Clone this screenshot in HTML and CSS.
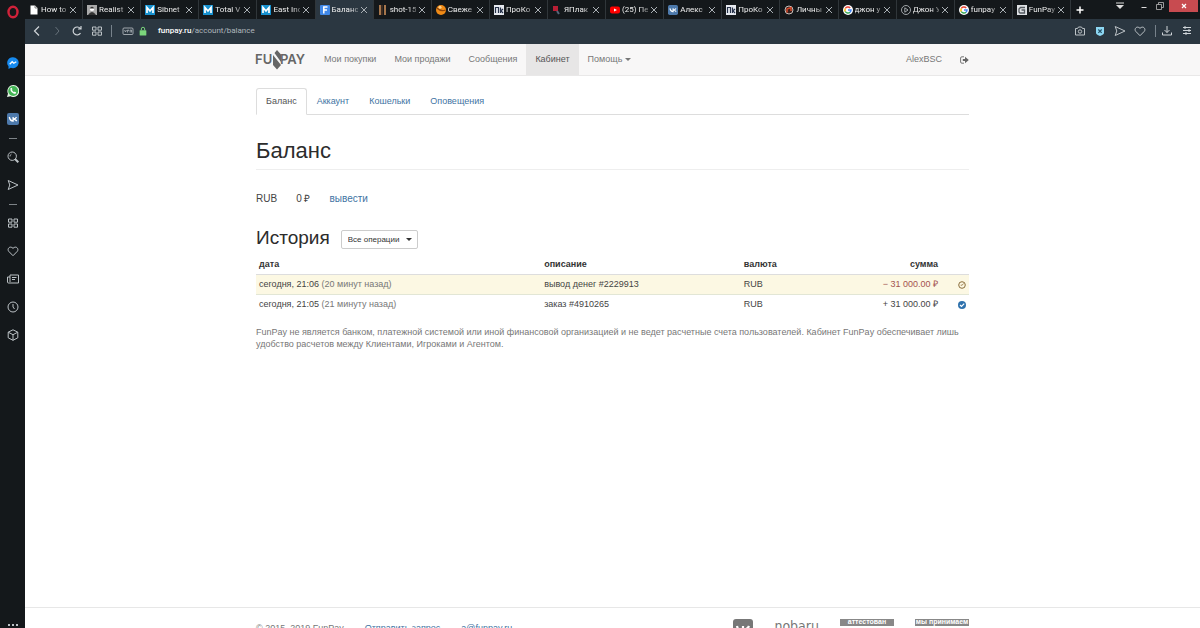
FILE: index.html
```html
<!DOCTYPE html>
<html lang="ru">
<head>
<meta charset="utf-8">
<title>Баланс</title>
<link rel="stylesheet" href="styles.css">
</head>
<body>
<svg class="defs" aria-hidden="true">
  <symbol id="x" viewBox="0 0 8 8"><path d="M1 1l6 6M7 1l-6 6" stroke="#a9afb4" stroke-width="1" fill="none"/></symbol>
  <symbol id="m" viewBox="0 0 10 10"><rect width="10" height="10" fill="#1791cf"/><path d="M2 8V2.500L5 6l3-3.500V8" fill="none" stroke="#fff" stroke-width="1.700"/></symbol>
  <symbol id="pk" viewBox="0 0 10 10"><rect width="10" height="10" fill="#e6e9ef"/><path d="M1.500 8V2.500h3V8M6.500 2.500V8M9 4L7 5.800 9 8" fill="none" stroke="#27324a" stroke-width="1.200"/></symbol>
  <symbol id="g" viewBox="0 0 10 10"><circle cx="5" cy="5" r="5" fill="#fff"/><g fill="none" stroke-width="1.500"><path d="M2.300 3.500A3 3 0 0 1 7.200 2.900" stroke="#e94235"/><path d="M2.300 3.500a3 3 0 0 0 0 3" stroke="#fabb05"/><path d="M2.300 6.500A3 3 0 0 0 7 7.200" stroke="#34a853"/><path d="M7 7.200A3 3 0 0 0 8 5H5" stroke="#4285f4"/></g></symbol>
  <symbol id="vk" viewBox="0 0 12 12"><rect width="12" height="12" rx="2" fill="#4d79ab"/><path d="M2.300 4c.5 2.500 1.700 4 3.800 4V4M9.500 4C9 5.300 8 6 6.300 6 8 6 9 7 9.800 8" fill="none" stroke="#fff" stroke-width="1.300"/></symbol>
  <symbol id="send" viewBox="0 0 12 12"><path d="M1.200 1.500L11 6 1.200 10.500 2.800 6z" fill="none" stroke="#bcc2c6"/></symbol>
  <symbol id="heart" viewBox="0 0 12 12"><path d="M6 10.700L1.700 6.300C-.2 4 2.800.2 6 3.300 9.200.2 12.200 4 10.300 6.300z" fill="none" stroke="#bcc2c6"/></symbol>
  <symbol id="grid" viewBox="0 0 12 12"><path d="M1.500 2h3.500v3.200H1.500zM7 2h3.500v3.200H7zM1.500 7H5v3.200H1.500zM7 7h3.500v3.200H7z" fill="none" stroke="#bcc2c6"/></symbol>
</svg>
<div class="browser">
  <aside class="rail">
    <button class="opera" aria-label="Меню Opera"><svg viewBox="0 0 12 14"><ellipse cx="6" cy="7" rx="4.500" ry="5.300" fill="none" stroke="#d0223a" stroke-width="2.400"/></svg></button>
    <button aria-label="Messenger"><svg viewBox="0 0 12 12"><path d="M6 .3a5.700 5.400 0 1 1-2.200 10.400L1.500 12V9.300A5.500 5.500 0 0 1 6 .3" fill="#168af0"/><path d="M2.700 7.300L5.200 4.700 6.800 6.200 9.300 4.700" fill="none" stroke="#fff" stroke-width="1.300"/></svg></button>
    <button aria-label="WhatsApp"><svg viewBox="0 0 12 12"><path d="M6.200 0a6 6 0 1 1-2.700 11.300L0 12l1-3.300A6 6 0 0 1 6.200 0" fill="#e5f4e5"/><circle cx="6.200" cy="6" r="5" fill="#43b455"/><path d="M4 3.500c0 2.500 2 4.700 4.600 4.700M4 3.200l.9 1.500M7.300 7l1.500 1" fill="none" stroke="#fff" stroke-width="1.400"/></svg></button>
    <button aria-label="ВКонтакте"><svg><use href="#vk"/></svg></button>
    <span class="dash"></span>
    <button aria-label="Поиск"><svg viewBox="0 0 12 12"><circle cx="5.200" cy="5.200" r="4.200" fill="none" stroke="#bcc2c6"/><path d="M8 8l3.300 3.300" stroke="#bcc2c6" stroke-width="2"/><path d="M3 5.500a2.300 2.300 0 0 1 1.500-2.400" fill="none" stroke="#bcc2c6" stroke-width=".8"/></svg></button>
    <button aria-label="Моя лента"><svg><use href="#send"/></svg></button>
    <span class="dash"></span>
    <button aria-label="Экспресс-панель"><svg><use href="#grid"/></svg></button>
    <button aria-label="Закладки"><svg><use href="#heart"/></svg></button>
    <button aria-label="Новости"><svg viewBox="0 0 12 12"><path d="M3 2h8.500v8H1.500Q.5 10 .5 9V4H3zM3 4v5M5 4.500h4.500M5 6.500h3" fill="none" stroke="#bcc2c6"/></svg></button>
    <button aria-label="История"><svg viewBox="0 0 12 12"><circle cx="6" cy="6" r="5" fill="none" stroke="#bcc2c6"/><path d="M6 3v3l1.500 2" fill="none" stroke="#bcc2c6"/></svg></button>
    <button aria-label="Расширения"><svg viewBox="0 0 12 12"><path d="M6 .8l4.800 2.400v5.600L6 11.300 1.200 8.800V3.200zM1.200 3.200L6 5.700l4.800-2.500M6 5.700v5.600" fill="none" stroke="#bcc2c6"/></svg></button>
    <button class="more" aria-label="Ещё"><svg viewBox="0 0 12 12"><path d="M1 8h2v2H1zM5 8h2v2H5zM9 8h2v2H9z" fill="#bcc2c6"/></svg></button>
  </aside>
  <div class="window">
    <div class="tabbar">
      <div class="tabs">
        <div class="tab"><svg class="fav" viewBox="0 0 10 10"><path d="M1.500.5H6L8.500 3v6.500h-7z" fill="#fff"/><path d="M6 .5V3h2.500" fill="none" stroke="#555" stroke-width=".7"/></svg><span>How to</span><button aria-label="Закрыть"><svg><use href="#x"/></svg></button></div>
        <div class="tab"><svg class="fav" viewBox="0 0 10 10"><rect width="10" height="10" fill="#aaa"/><circle cx="5" cy="3.700" r="2.300" fill="#fff"/><path d="M2.500 3.500Q5-.5 7.500 3.500M1 10Q5 4 9 10" fill="#333"/></svg><span>Realist</span><button aria-label="Закрыть"><svg><use href="#x"/></svg></button></div>
        <div class="tab"><svg class="fav"><use href="#m"/></svg><span>Sibnet</span><button aria-label="Закрыть"><svg><use href="#x"/></svg></button></div>
        <div class="tab"><svg class="fav"><use href="#m"/></svg><span>Total V</span><button aria-label="Закрыть"><svg><use href="#x"/></svg></button></div>
        <div class="tab"><svg class="fav"><use href="#m"/></svg><span>East Inc</span><button aria-label="Закрыть"><svg><use href="#x"/></svg></button></div>
        <div class="tab active"><svg class="fav" viewBox="0 0 10 10"><rect width="10" height="10" rx="1" fill="#4088e8"/><path d="M3.800 8.500V2H7.500M3.800 5H7" fill="none" stroke="#fff" stroke-width="1.500"/></svg><span>Баланс</span><button aria-label="Закрыть"><svg><use href="#x"/></svg></button></div>
        <div class="tab"><svg class="fav" viewBox="0 0 10 10"><path d="M2 0v10M7 0v10" stroke="#a6764c" stroke-width="2"/><path d="M4 0v10" stroke="#3b2a20" stroke-width="2"/></svg><span>shot-15</span><button aria-label="Закрыть"><svg><use href="#x"/></svg></button></div>
        <div class="tab"><svg class="fav" viewBox="0 0 10 10"><circle cx="5" cy="5" r="5" fill="#ef8a16"/><path d="M1 3Q5 7 9.500 5" fill="none" stroke="#8f4307" stroke-width="1.300"/><circle cx="4" cy="2.300" r="1.500" fill="#ffd28a"/></svg><span>Свеже</span><button aria-label="Закрыть"><svg><use href="#x"/></svg></button></div>
        <div class="tab"><svg class="fav"><use href="#pk"/></svg><span>ПроКо</span><button aria-label="Закрыть"><svg><use href="#x"/></svg></button></div>
        <div class="tab"><svg class="fav" viewBox="0 0 10 10"><path d="M1 1h5v5H1z" fill="#b91f35"/><path d="M5 6l2 3" stroke="#56677c" stroke-width="2"/></svg><span>ЯПлак</span><button aria-label="Закрыть"><svg><use href="#x"/></svg></button></div>
        <div class="tab"><svg class="fav" viewBox="0 0 10 10"><rect y="1.500" width="10" height="7" rx="2" fill="#f00"/><path d="M4 3.500L7 5 4 6.500z" fill="#fff"/></svg><span>(25) Пе</span><button aria-label="Закрыть"><svg><use href="#x"/></svg></button></div>
        <div class="tab"><svg class="fav"><use href="#vk"/></svg><span>Алекс</span><button aria-label="Закрыть"><svg><use href="#x"/></svg></button></div>
        <div class="tab"><svg class="fav"><use href="#pk"/></svg><span>ПроКо</span><button aria-label="Закрыть"><svg><use href="#x"/></svg></button></div>
        <div class="tab"><svg class="fav" viewBox="0 0 10 10"><circle cx="5" cy="5" r="4" fill="#381e1b" stroke="#c5c0bb"/><path d="M3 7.500V4L7 2.500v3.500" fill="none" stroke="#d6492a" stroke-width="1.500"/></svg><span>Личны</span><button aria-label="Закрыть"><svg><use href="#x"/></svg></button></div>
        <div class="tab"><svg class="fav"><use href="#g"/></svg><span>джон у</span><button aria-label="Закрыть"><svg><use href="#x"/></svg></button></div>
        <div class="tab"><svg class="fav" viewBox="0 0 10 10"><circle cx="5" cy="5" r="4.500" fill="none" stroke="#c3c7ca" stroke-width=".8"/><path d="M3.800 2.800L7 5 3.800 7.200z" fill="none" stroke="#c3c7ca" stroke-width=".8"/></svg><span>Джон У</span><button aria-label="Закрыть"><svg><use href="#x"/></svg></button></div>
        <div class="tab"><svg class="fav"><use href="#g"/></svg><span>funpay</span><button aria-label="Закрыть"><svg><use href="#x"/></svg></button></div>
        <div class="tab"><svg class="fav" viewBox="0 0 10 10"><rect width="10" height="10" fill="#dfe2e5"/><path d="M8 2.500H3.500L2 4v3l1 1h4.500V5H4.500" fill="none" stroke="#555b61" stroke-width="1.300"/></svg><span>FunPay</span><button aria-label="Закрыть"><svg><use href="#x"/></svg></button></div>
      </div>
      <div class="controls">
        <button class="plus" aria-label="Новая вкладка"><svg viewBox="0 0 8 8"><path d="M4 .5v7M.5 4h7" stroke="#fff" stroke-width="1.500"/></svg></button>
        <button class="tabmenu" aria-label="Меню вкладок"><svg viewBox="0 0 10 8"><path d="M1 1h8" stroke="#ddd"/><path d="M1 3h8L5 7z" fill="#ddd"/></svg></button>
        <button class="min" aria-label="Свернуть"><svg viewBox="0 0 6 8"><path d="M.5 5.500h5" stroke="#ddd"/></svg></button>
        <button class="restore" aria-label="Развернуть"><svg viewBox="0 0 8 8"><path d="M2.500 2.500v-2h5v5h-2M.5 2.500h5v5h-5z" fill="none" stroke="#bbb" stroke-width=".8"/></svg></button>
        <button class="close" aria-label="Закрыть окно"><svg viewBox="0 0 8 8"><path d="M2 2l4 4M6 2L2 6" stroke="#fff" stroke-width="1.200"/></svg></button>
      </div>
    </div>
    <div class="toolbar">
      <button aria-label="Назад"><svg viewBox="0 0 12 12"><path d="M8 1.500L3.500 6 8 10.500" fill="none" stroke="#d0d5d9" stroke-width="1.200"/></svg></button>
      <button aria-label="Вперёд"><svg viewBox="0 0 12 12"><path d="M4.500 2L8 6l-3.500 4" fill="none" stroke="#66717a"/></svg></button>
      <button aria-label="Обновить"><svg viewBox="0 0 12 12"><path d="M9.500 8.200A4 4 0 1 1 9.300 3.500M10 1v3H7" fill="none" stroke="#d0d5d9" stroke-width="1.200"/></svg></button>
      <button aria-label="Экспресс-панель"><svg><use href="#grid"/></svg></button>
      <span class="bar"></span>
      <button class="vpn" aria-label="VPN"><svg viewBox="0 0 12 12"><rect x="1" y="3" width="10" height="6.500" rx="1" fill="none" stroke="#bcc2c6" stroke-width=".8"/><path d="M2.500 5l1 2 1-2M5.500 7.500V5h1.200v1.200M8.200 7.500V5h1.300v2.500" fill="none" stroke="#bcc2c6" stroke-width=".7"/></svg></button>
      <svg class="lock" viewBox="0 0 12 12"><rect x="2" y="5" width="8" height="6.500" rx=".7" fill="#7bd67c"/><path d="M4 5V3.500a2 2 0 0 1 4 0V5" fill="none" stroke="#7bd67c" stroke-width="1.200"/></svg>
      <a class="url" href="#"><b>funpay.ru</b>/account/balance</a>
      <div class="tools">
        <button aria-label="Снимок"><svg viewBox="0 0 12 12"><path d="M1.500 3.500h2L4.500 2h3l1 1.500h2v6.500h-9z" fill="none" stroke="#bcc2c6"/><circle cx="6" cy="6.500" r="1.700" fill="none" stroke="#bcc2c6"/></svg></button>
        <button aria-label="Защита"><svg viewBox="0 0 12 12"><path d="M2 2h8v6Q10 9.500 6 11 2 9.500 2 8z" fill="#8dd7f3"/><path d="M4.300 4.500l3.400 3.400M7.700 4.500L4.300 7.900" stroke="#245269" stroke-width="1.200"/></svg></button>
        <button aria-label="Отправить"><svg><use href="#send"/></svg></button>
        <button aria-label="В закладки"><svg><use href="#heart"/></svg></button>
        <span class="bar"></span>
        <button aria-label="Загрузки"><svg viewBox="0 0 12 12"><path d="M6 1v6.500M3.500 5L6 7.500 8.500 5M1.500 7.500V10h9V7.500" fill="none" stroke="#d0d5d9"/></svg></button>
        <button aria-label="Настройки"><svg viewBox="0 0 12 12"><path d="M2 2.500h8M2 5.500h8M2 8.500h8M4 1v3M8 4v3M5 7v3" stroke="#d0d5d9"/></svg></button>
      </div>
    </div>
    <div class="page">
      <header class="header"><nav class="container nav">
        <a class="logo" href="#" aria-label="FunPay"><svg viewBox="0 0 50 20"><text x="-1" y="14">FU</text><text x="24" y="14">PAY</text><path d="M21 0L25 4.500V12L18.500 3zM21 19.500L25 15 17 5v10z" fill="#666"/></svg></a>
        <a href="#">Мои покупки</a><a href="#">Мои продажи</a><a href="#">Сообщения</a><a class="current" href="#">Кабинет</a><a href="#">Помощь <i class="caret"></i></a>
        <a class="user" href="#">AlexBSC</a>
        <a class="exit" href="#" aria-label="Выйти"><svg viewBox="0 0 9 8"><path d="M4 .8H2Q.6.800.6 2v4q0 1.200 1.400 1.200h2" fill="none" stroke="#777" stroke-width="1"/><path d="M2.800 3H5V.8L8.800 4 5 7.200V5H2.800z" fill="#666"/></svg></a>
      </nav></header>
      <main class="container main">
        <nav class="subnav"><a class="current" href="#">Баланс</a><a href="#">Аккаунт</a><a href="#">Кошельки</a><a href="#">Оповещения</a></nav>
        <h1>Баланс</h1>
        <div class="balance"><span>RUB</span><span>0 ₽</span><a href="#">вывести</a></div>
        <div class="history"><h2>История</h2>
          <div class="picker"><select aria-label="Операции"><option>Все операции</option></select><i class="caret"></i></div>
        </div>
        <table>
          <thead><tr><th class="date">дата</th><th class="desc">описание</th><th class="cur">валюта</th><th class="sum">сумма</th><th class="state"></th></tr></thead>
          <tbody>
            <tr class="pending"><td>сегодня, 21:06 <small>(20 минут назад)</small></td><td>вывод денег #2229913</td><td>RUB</td><td class="sum minus">− 31 000.00 ₽</td><td class="state"><svg viewBox="0 0 8 8"><circle cx="4" cy="4" r="3.300" fill="none" stroke="#8a6d3b"/><path d="M2.700 4.200H4.200L5.500 2.500" fill="none" stroke="#8a6d3b" stroke-width=".8"/></svg></td></tr>
            <tr><td>сегодня, 21:05 <small>(21 минуту назад)</small></td><td>заказ #4910265</td><td>RUB</td><td class="sum">+ 31 000.00 ₽</td><td class="state"><svg viewBox="0 0 8 8"><circle cx="4" cy="4" r="4" fill="#2f72ad"/><path d="M2 4l1.500 1.500L6.200 2.700" fill="none" stroke="#fff" stroke-width="1.200"/></svg></td></tr>
          </tbody>
        </table>
        <p class="note">FunPay не является банком, платежной системой или иной финансовой организацией и не ведет расчетные счета пользователей. Кабинет FunPay обеспечивает лишь удобство расчетов между Клиентами, Игроками и Агентом.</p>
      </main>
      <footer class="footer"><div class="container foot">
        <span>© 2015–2019 FunPay</span><a href="#">Отправить запрос</a><a href="#">a@funpay.ru</a>
        <div class="badges">
          <svg class="vkbadge" viewBox="0 0 20 20"><rect width="20" height="20" rx="3" fill="#777"/><path d="M4 7c1 4 3 6.500 6 6.500V7M16 7c-1 2.500-3 3.500-5.500 3.500 2.500 0 4 1 6 3.500" fill="none" stroke="#fff" stroke-width="2.200"/></svg>
          <span class="doba">nobaru</span>
          <span class="plate">аттестован</span>
          <span class="plate">мы принимаем</span>
        </div>
      </div></footer>
    </div>
  </div>
</div>
</body>
</html>
```
FILE: styles.css
```css
* { box-sizing: border-box; }
body { margin: 0; font: 9px/12px "Liberation Sans", Arial, sans-serif; color: #444; background: #fff; }
.defs { position: absolute; width: 0; height: 0; }
a { color: #3f74a3; text-decoration: none; }
button { border: 0; padding: 0; background: none; display: flex; align-items: center; justify-content: center; }
svg { display: block; }
.browser { display: flex; height: 100vh; overflow: hidden; }
.window { flex: 1; min-width: 0; display: flex; flex-direction: column; }

.rail { flex: 0 0 25px; background: #14181b; display: flex; flex-direction: column; align-items: center; }
.rail button { height: 28px; flex: none; }
.rail svg { width: 12px; height: 12px; }
.rail .opera { height: 24px; margin-bottom: 25px; }
.rail .opera svg { height: 14px; }
.dash { width: 8px; height: 1px; margin: 5px 0 4px; background: #7d8387; }
.rail .more { height: 12px; margin-top: auto; }

.tabbar { flex: 0 0 19px; display: flex; background: #14181b; font: 8px/19px Roboto, "Noto Sans", sans-serif; }
.tabs { flex: 1; min-width: 0; display: flex; }
.tab { flex: 1 1 0; min-width: 0; display: flex; align-items: center; gap: 2px; padding: 0 5px 0 4px; border-right: 1px solid #30363a; color: #eee; }
.tab span { flex: 1; min-width: 0; white-space: nowrap; mask-image: linear-gradient(90deg, #000 70%, #0006); }
.tab .fav { width: 10px; height: 10px; flex: none; }
.tab button svg { width: 8px; height: 8px; }
.tab.active { background: #2b3741; }
.controls { flex: 0 0 129px; display: flex; align-items: flex-start; }
.controls svg { width: 8px; height: 8px; }
.controls button { height: 12px; }
.controls .plus { width: 18px; height: 19px; }
.tabmenu { margin-left: 26px; }
.controls .tabmenu svg { width: 10px; }
.min { margin-left: 15px; }
.restore { margin-left: 8px; }
.controls .close { width: 29px; background: #c84b50; margin: 0 2px 0 auto; }

.toolbar { flex: 0 0 25px; display: flex; align-items: center; gap: 8px; padding: 0 7px 1px 6px; background: #2b3741; }
.toolbar svg { width: 12px; height: 12px; }
.toolbar svg.lock { width: 10px; height: 10px; }
.toolbar .vpn { margin-left: 2px; }
.lock { margin-left: -4px; }
.bar { width: 1px; height: 12px; background: #77828b; }
.url { margin-left: 2px; font: 8px/12px Roboto, "Noto Sans", sans-serif; color: #aeb6bc; }
.url b { font-weight: 500; color: #fff; }
.tools { margin-left: auto; display: flex; align-items: center; gap: 8px; }
.tools .bar { margin: 0 -3px 0 1px; }

.page { flex: 1; min-height: 0; display: flex; flex-direction: column; overflow: hidden; }
.container { width: 100%; max-width: 713px; margin: 0 auto; }
.header { flex: none; background: #f8f7f7; border-bottom: 1px solid #e9e8e8; }
.nav { display: flex; height: 31px; line-height: 31px; }
.nav a { color: #777; padding: 0 9px; white-space: nowrap; }
.nav .logo { padding: 0; margin-right: 9px; display: flex; align-items: center; }
.logo svg { width: 50px; height: 20px; overflow: visible; }
.logo text { font: 600 13px Inter, sans-serif; fill: #666; }
.nav .current { background: #e7e6e6; color: #555; }
.caret { display: inline-block; border: 3px solid transparent; border-top-color: currentColor; border-bottom: 0; vertical-align: middle; }
.nav .user { margin-left: auto; }
.nav .exit { padding: 0 0 0 9px; display: flex; align-items: center; }
.exit svg { width: 9px; height: 8px; }

.main { flex: 1; padding-top: 12px; }
.subnav { display: flex; height: 27px; border-bottom: 1px solid #ddd; line-height: 26px; }
.subnav a { padding: 0 10px; }
.subnav .current { height: 27px; border: 1px solid #ddd; border-bottom-color: #fff; border-radius: 3px 3px 0 0; color: #555; background: #fff; padding: 0 9px; line-height: 25px; }
h1, h2 { font-weight: 400; color: #2c2c2c; margin: 0; }
h1 { font-size: 22px; line-height: 28px; margin-top: 22px; padding-bottom: 4px; border-bottom: 1px solid #eee; }
.balance { display: flex; gap: 19px; margin-top: 22px; font-size: 10px; line-height: 14px; }
.history { display: flex; align-items: center; gap: 11px; margin-top: 21px; }
h2 { font-size: 19px; line-height: 22px; }
.picker { position: relative; color: #333; }
.picker select { appearance: none; display: block; width: 77px; height: 19px; margin-top: 2px; padding: 0 6px; border: 1px solid #ccc; border-radius: 2px; background: #fff; font: 8px "Liberation Sans", Arial, sans-serif; color: #333; }
.picker .caret { position: absolute; right: 6px; top: 10px; pointer-events: none; }
table { width: 100%; margin-top: 6px; border-collapse: collapse; table-layout: fixed; }
th, td { padding: 3px; line-height: 13px; text-align: left; white-space: nowrap; }
th { color: #333; border-bottom: 1px solid #ddd; }
tbody tr + tr { border-top: 1px solid #e2e6d5; }
.date { width: 40%; }
.desc { width: 28%; }
.cur { width: 18%; }
.state { width: 28px; }
.sum { text-align: right; }
.state svg { width: 8px; height: 8px; margin-left: auto; }
.pending { background: #fcf8e3; }
.minus { color: #a4534f; }
small { font-size: 9px; color: #777; }
.note { margin: 12px 0 0; color: #777; }

.footer { flex: 0 0 21px; border-top: 1px solid #e7e7e7; overflow: hidden; color: #777; }
.foot { display: flex; gap: 21px; padding-top: 14px; }
.badges { margin: -3px 0 0 auto; display: flex; align-items: flex-start; gap: 21px; }
.vkbadge { width: 20px; height: 20px; }
.doba { font: 14px/15px "DejaVu Sans Condensed", sans-serif; color: #777; }
.plate { width: 54px; height: 7px; background: #888; color: #fff; font-weight: 700; font-size: 7px; line-height: 6px; text-align: center; white-space: nowrap; }
```
